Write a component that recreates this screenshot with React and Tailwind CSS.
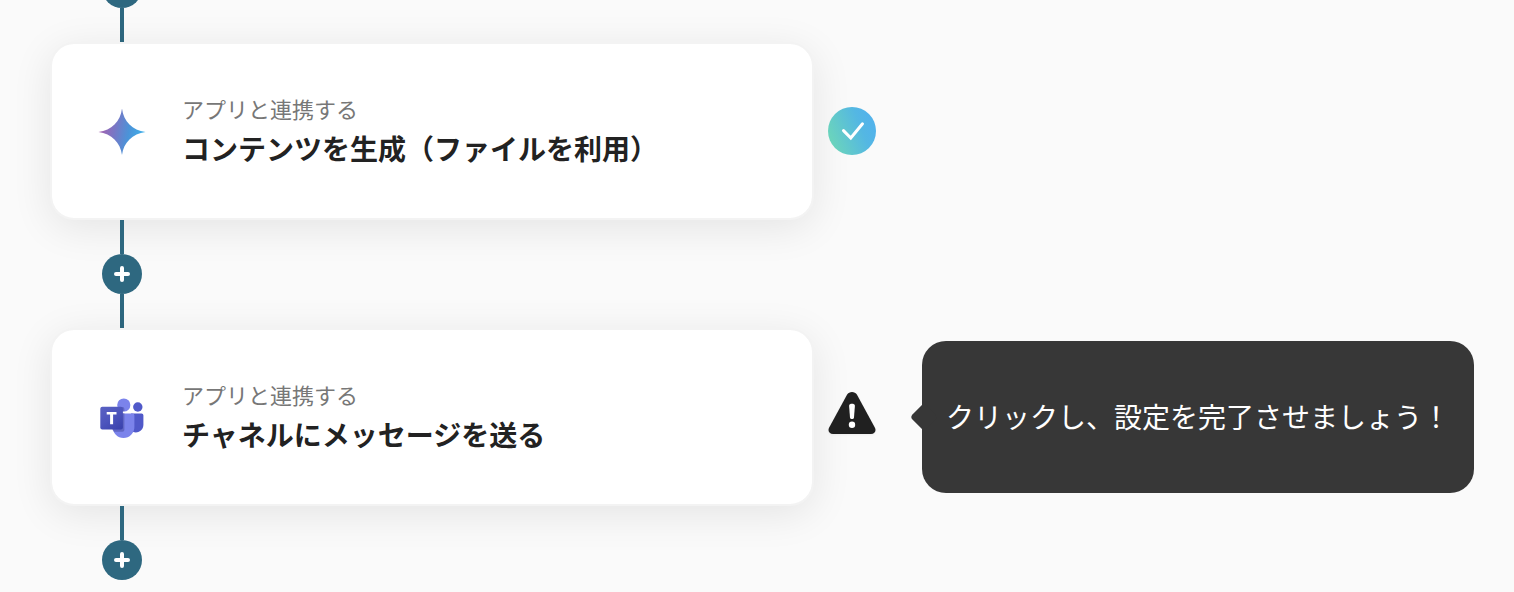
import React from 'react'

const GeminiIcon = () => (
    <svg viewBox="0 0 48 48" className="size-12 shrink-0" aria-hidden="true">
        <defs>
            <linearGradient id="gemini" x1="2" y1="20" x2="46" y2="28" gradientUnits="userSpaceOnUse">
                <stop offset="0" stopColor="#a562b0" />
                <stop offset="0.35" stopColor="#7678c6" />
                <stop offset="0.65" stopColor="#4b93d8" />
                <stop offset="1" stopColor="#3fb0ea" />
            </linearGradient>
        </defs>
        <path d="M24 1.5C25.6 14.5 34.5 23.4 47.5 25C34.5 26.6 25.6 35.5 24 48C22.4 35.5 13.5 26.6 0.5 25C13.5 23.4 22.4 14.5 24 1.5Z" fill="url(#gemini)" />
    </svg>
)

const TeamsIcon = () => (
    <svg viewBox="0 0 48 48" className="size-12 shrink-0" aria-hidden="true">
        <defs>
            <linearGradient id="teams" x1="4" y1="10" x2="24" y2="36" gradientUnits="userSpaceOnUse">
                <stop offset="0" stopColor="#5a62c3" />
                <stop offset="0.5" stopColor="#4d55bd" />
                <stop offset="1" stopColor="#3940ab" />
            </linearGradient>
            <clipPath id="teams-body">
                <circle cx="26" cy="11" r="6.5" />
                <path d="M16 19H35.5V31.5A12 12 0 0 1 14 38Z" />
            </clipPath>
        </defs>
        <g transform="translate(0 1)">
            <circle cx="39.8" cy="13" r="4.7" fill="#5059c9" />
            <path d="M33 19.5H43.6A1.8 1.8 0 0 1 45.4 21.3V31A7.5 7.5 0 0 1 33 36.5Z" fill="#5059c9" />
            <circle cx="25.8" cy="11" r="6.6" fill="#7b83eb" />
            <path d="M15 19.5H34.6A1.8 1.8 0 0 1 36.4 21.3V33A10.9 10.9 0 0 1 14.6 33V19.5Z" fill="#7b83eb" />
            <path d="M12 13H24.4A2 2 0 0 1 26.4 15V35.8A2 2 0 0 1 24.4 37.8H16L12 33Z" fill="#20256b" opacity="0.3" clipPath="url(#teams-body)" />
            <rect x="2.3" y="12.8" width="22.6" height="22.6" rx="2" fill="url(#teams)" />
            <path d="M8.7 18H18.5V20.6H15.1V30.2H12.1V20.6H8.7Z" fill="#fff" />
        </g>
    </svg>
)

const DoneIcon = () => (
    <svg viewBox="0 0 48 48" className="size-12 shrink-0" role="img" aria-label="設定完了">
        <defs>
            <linearGradient id="done" x1="4" y1="34" x2="44" y2="18" gradientUnits="userSpaceOnUse">
                <stop offset="0" stopColor="#6ad3bd" />
                <stop offset="0.75" stopColor="#54b7e3" />
                <stop offset="1" stopColor="#52b3ea" />
            </linearGradient>
        </defs>
        <circle cx="24" cy="24" r="24" fill="url(#done)" />
        <path d="M15.5 23.6L22.8 31L34.5 16.8" fill="none" stroke="#fff" strokeWidth="3" strokeLinecap="round" strokeLinejoin="miter" />
    </svg>
)

const WarningIcon = () => (
    <svg viewBox="0 0 48 48" className="size-12 shrink-0 overflow-visible drop-shadow-xs" role="img" aria-label="未設定">
        <path d="M19 1.8C21.2 -1.9 26.8 -1.9 29 1.8L46.8 34.4C48.6 37.8 46.8 41 43 41H5C1.2 41 -0.6 37.8 1.2 34.4Z" fill="#202020" />
        <path d="M21.1 12.8C21.1 10.2 26.9 10.2 26.9 12.8L26 24.6C25.8 26.6 22.2 26.6 22 24.6Z" fill="#fff" />
        <circle cx="24" cy="31.8" r="3.2" fill="#fff" />
    </svg>
)

const Line = () => <div className="h-[34px] w-1 bg-[#2e6880]" />

const AddButton = () => (
    <button type="button" aria-label="ステップを追加" className="flex size-10 items-center justify-center rounded-full bg-[#2e6880] hover:bg-[#255669]">
        <svg viewBox="0 0 16 16" className="size-4" aria-hidden="true">
            <path d="M8 2V14M2 8H14" stroke="#fff" strokeWidth="4" strokeLinecap="round" />
        </svg>
    </button>
)

const Connector = ({ children }) => (
    <div className="ml-[52px] flex w-10 flex-col items-center">{children}</div>
)

const Step = ({ icon, title, status, hint }) => (
    <section className="flex items-center">
        <div className="flex h-[178px] max-w-[764px] flex-1 items-center gap-9 rounded-3xl border-2 border-[#f3f3f3] bg-white bg-clip-padding px-[46px] shadow-[0_8px_40px_rgba(0,0,0,0.09)]">
            {icon}
            <div className="pb-1">
                <p className="text-[22px] leading-[38px] text-[#777777]">アプリと連携する</p>
                <h2 className="text-[28px] leading-[42px] font-bold text-[#222222]">{title}</h2>
            </div>
        </div>
        <div className="ml-3.5 flex shrink-0 items-center gap-[46px]">
            {status}
            {hint && (
                <div role="tooltip" className="relative flex h-[152px] items-center rounded-3xl bg-[#373737] px-6 pb-0.5">
                    <span className="absolute top-1/2 -left-2 size-5 -translate-y-1/2 rotate-45 rounded-sm bg-[#373737]" />
                    <p className="relative text-[28px] leading-[42px] whitespace-nowrap text-white">{hint}</p>
                </div>
            )}
        </div>
    </section>
)

const App = () => {
    return (
        <main className="min-h-screen overflow-hidden bg-[#fafafa] pr-10 pl-[50px] font-['Noto_Sans_CJK_JP',sans-serif]">
            {/* the first button is scrolled partly out of view */}
            <div className="-mt-8">
                <Connector>
                    <AddButton />
                    <Line />
                </Connector>
                <Step icon={<GeminiIcon />} title="コンテンツを生成（ファイルを利用）" status={<DoneIcon />} />
                <Connector>
                    <Line />
                    <AddButton />
                    <Line />
                </Connector>
                <Step
                    icon={<TeamsIcon />}
                    title="チャネルにメッセージを送る"
                    status={<WarningIcon />}
                    hint="クリックし、設定を完了させましょう！"
                />
                <Connector>
                    <Line />
                    <AddButton />
                </Connector>
            </div>
        </main>
    )
}

export default App
